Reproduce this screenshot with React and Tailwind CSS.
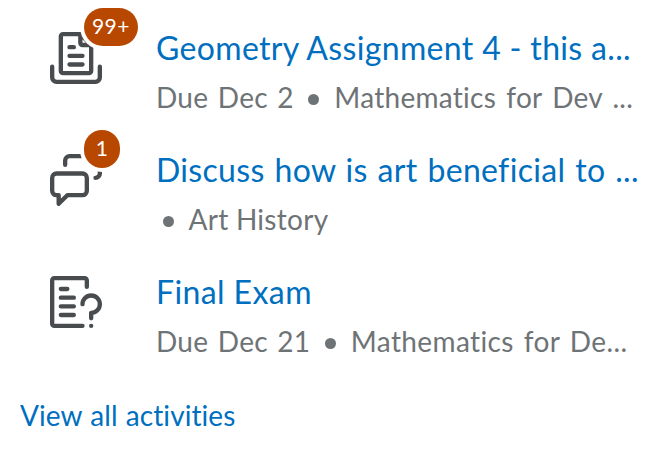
function IconFrame({ children }) {
  return (
    <svg
      className="block size-[52px]"
      viewBox="0 0 24 24"
      fill="none"
      stroke="#494c4e"
      strokeWidth="2"
      strokeLinecap="round"
      strokeLinejoin="round"
    >
      {children}
    </svg>
  );
}

function AssignmentIcon() {
  return (
    <IconFrame>
      <path d="M14 1H6a1 1 0 0 0-1 1v16a1 1 0 0 0 1 1h12a1 1 0 0 0 1-1V6l-5-5v4a1 1 0 0 0 1 1h4" />
      <path d="M1 16v5a2 2 0 0 0 2 2h18a2 2 0 0 0 2-2v-5" />
      <path d="M9 7h2M9 11h6M9 15h6" />
    </IconFrame>
  );
}

function DiscussionIcon() {
  return (
    <IconFrame>
      <path d="M7 5V3a2 2 0 0 1 2-2h12a2 2 0 0 1 2 2v6a2 2 0 0 1-2 2" />
      <path d="M3 9h12a2 2 0 0 1 2 2v6a2 2 0 0 1-2 2H8l-4 4v-4H3a2 2 0 0 1-2-2v-6a2 2 0 0 1 2-2z" />
    </IconFrame>
  );
}

function QuizIcon() {
  return (
    <IconFrame>
      <path d="M17 5V2a1 1 0 0 0-1-1H2a1 1 0 0 0-1 1v20a1 1 0 0 0 1 1h13" />
      <path d="M5 6h3M5 10h6M5 14h6M5 18h6" />
      <path d="M15 13a4 4 0 1 1 4 4v2.5" />
      <circle cx="19" cy="23" r="1" fill="#494c4e" stroke="none" />
    </IconFrame>
  );
}

const activities = [
  {
    icon: AssignmentIcon,
    badge: "99+",
    title: "Geometry Assignment 4 - this a...",
    titleSpacing: "tracking-[0.34px]",
    due: "Due Dec 2",
    course: "Mathematics for Dev ...",
    courseSpacing: "[word-spacing:2.7px]",
  },
  {
    icon: DiscussionIcon,
    badge: "1",
    title: "Discuss how is art beneficial to ...",
    titleSpacing: "tracking-[0.32px] [word-spacing:1.35px]",
    due: "",
    course: "Art History",
    courseSpacing: "",
  },
  {
    icon: QuizIcon,
    badge: "",
    title: "Final Exam",
    titleSpacing: "tracking-[0.4px]",
    due: "Due Dec 21",
    course: "Mathematics for De...",
    courseSpacing: "tracking-[0.38px] [word-spacing:2.5px]",
  },
];

function Activity({ icon: Icon, badge, title, titleSpacing, due, course, courseSpacing }) {
  return (
    <li className="flex h-[122px] pl-[50px]">
      <div className="relative h-[52px] w-[106px] shrink-0">
        <Icon />
        {badge && (
          <span className="absolute -top-6 left-[34px] flex h-[38px] min-w-9 items-center justify-center rounded-[19px] bg-[#b84700] px-2 pb-1 text-[21px] leading-none tracking-[0.4px] text-white ring-4 ring-white">
            {badge}
          </span>
        )}
      </div>
      <div className="-mt-0.5 whitespace-nowrap">
        <a className={`block h-9 text-[32px] leading-9 text-[#006fbf] ${titleSpacing}`}>{title}</a>
        <div className="mt-[13px] flex h-9 items-center text-[28px] leading-9 tracking-[0.28px] text-[#6e7376]">
          {due && <span className="mr-2 [word-spacing:2px]">{due}</span>}
          <span className="mr-[15px] ml-[6.5px] size-[11px] translate-y-0.5 rounded-full bg-[#6e7376]" />
          <span className={courseSpacing}>{course}</span>
        </div>
      </div>
    </li>
  );
}

export default function App() {
  return (
    <main className="h-[464px] w-[660px] overflow-hidden bg-white pt-8 font-['Lato',sans-serif]">
      <ul>
        {activities.map((activity) => (
          <Activity key={activity.title} {...activity} />
        ))}
      </ul>
      <a className="-mt-px block pl-5 text-[28px] leading-9 tracking-[0.07px] text-[#006fbf] [word-spacing:1px]">
        View all activities
      </a>
    </main>
  );
}
